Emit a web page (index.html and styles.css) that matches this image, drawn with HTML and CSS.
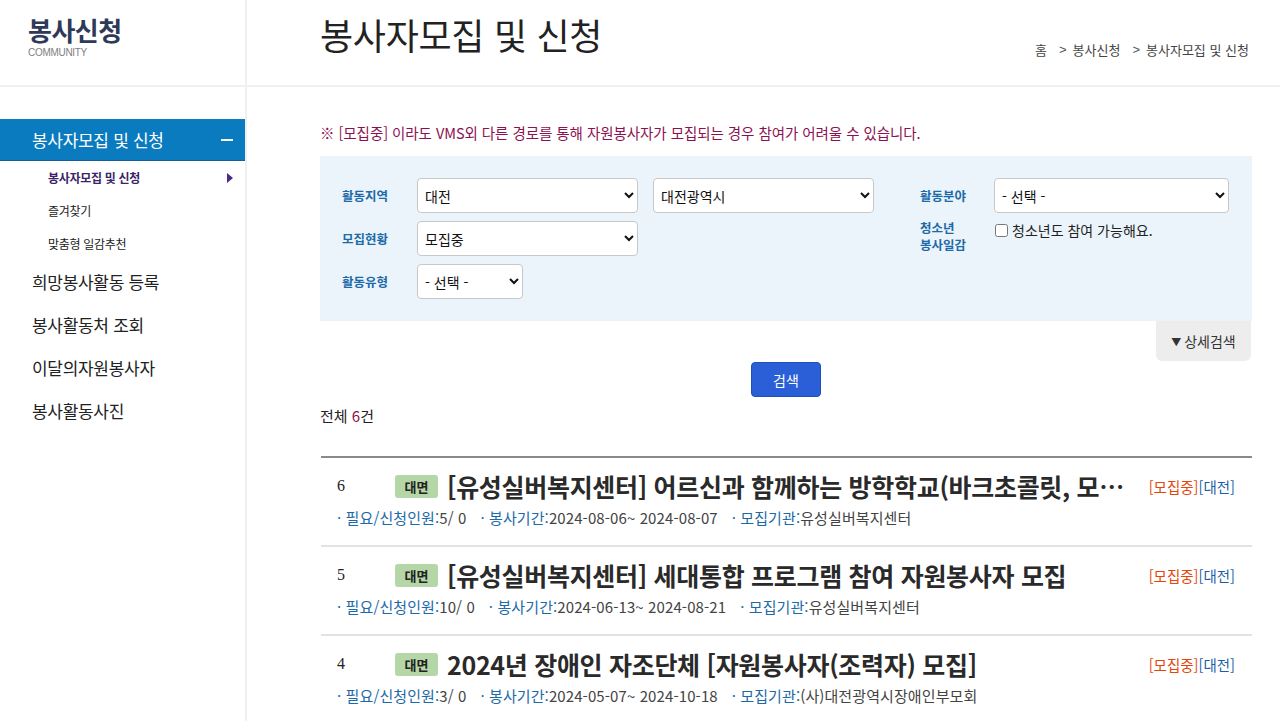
FILE: index.html
```html
<!DOCTYPE html>
<html lang="ko">
<head>
<meta charset="utf-8">
<title>봉사자모집 및 신청</title>
<link rel="stylesheet" href="styles.css">
</head>
<body>
<div class="page">
  <aside class="sidebar">
    <div class="side-head">
      <div class="logo">봉사신청</div>
      <div class="logo-sub">COMMUNITY</div>
    </div>
    <nav class="menu">
      <a class="menu-item active">봉사자모집 및 신청<span class="minus"></span></a>
      <ul class="submenu">
        <li class="sub-active">봉사자모집 및 신청<span class="tri"></span></li>
        <li>즐겨찾기</li>
        <li>맞춤형 일감추천</li>
      </ul>
      <a class="menu-item">희망봉사활동 등록</a>
      <a class="menu-item">봉사활동처 조회</a>
      <a class="menu-item">이달의자원봉사자</a>
      <a class="menu-item">봉사활동사진</a>
    </nav>
  </aside>
  <main class="main">
    <header class="main-head">
      <h1 class="title">봉사자모집 및 신청</h1>
      <div class="crumb"><span>홈</span><span class="sep">&gt;</span><span>봉사신청</span><span class="sep">&gt;</span><span>봉사자모집 및 신청</span></div>
    </header>
    <section class="content">
      <p class="notice">※ [모집중] 이라도 VMS외 다른 경로를 통해 자원봉사자가 모집되는 경우 참여가 어려울 수 있습니다.</p>
      <div class="filter">
        <div class="fcol left">
          <div class="frow">
            <label class="flabel">활동지역</label>
            <select class="sel w221"><option>대전</option></select>
            <select class="sel w221 ml15"><option>대전광역시</option></select>
          </div>
          <div class="frow">
            <label class="flabel">모집현황</label>
            <select class="sel w221"><option>모집중</option></select>
          </div>
          <div class="frow">
            <label class="flabel">활동유형</label>
            <select class="sel w106"><option>- 선택 -</option></select>
          </div>
        </div>
        <div class="fcol right">
          <div class="frow">
            <label class="flabel w74">활동분야</label>
            <select class="sel w235"><option>- 선택 -</option></select>
          </div>
          <div class="frow top">
            <label class="flabel w74 two">청소년<br>봉사일감</label>
            <label class="check"><input type="checkbox">청소년도 참여 가능해요.</label>
          </div>
        </div>
      </div>
      <div class="tab-row"><span class="detail-tab"><span class="dtri">▼</span>상세검색</span></div>
      <div class="btn-row"><button class="search-btn">검색</button></div>
      <p class="total">전체 <em>6</em>건</p>
      <ul class="list">
        <li class="item">
          <div class="item-top">
            <span class="num">6</span>
            <span class="badge">대면</span>
            <span class="item-title">[유성실버복지센터] 어르신과 함께하는 방학학교(바크초콜릿, 모루인형 만들기 등) 보조 봉사자 모집</span>
            <span class="status"><span class="st-on">[모집중]</span><span class="st-area">[대전]</span></span>
          </div>
          <div class="meta">
            <span class="m"><b>· 필요/신청인원:</b>5/ 0</span>
            <span class="m"><b>· 봉사기간:</b>2024-08-06~ 2024-08-07</span>
            <span class="m"><b>· 모집기관:</b>유성실버복지센터</span>
          </div>
        </li>
        <li class="item">
          <div class="item-top">
            <span class="num">5</span>
            <span class="badge">대면</span>
            <span class="item-title">[유성실버복지센터] 세대통합 프로그램 참여 자원봉사자 모집</span>
            <span class="status"><span class="st-on">[모집중]</span><span class="st-area">[대전]</span></span>
          </div>
          <div class="meta">
            <span class="m"><b>· 필요/신청인원:</b>10/ 0</span>
            <span class="m"><b>· 봉사기간:</b>2024-06-13~ 2024-08-21</span>
            <span class="m"><b>· 모집기관:</b>유성실버복지센터</span>
          </div>
        </li>
        <li class="item">
          <div class="item-top">
            <span class="num">4</span>
            <span class="badge">대면</span>
            <span class="item-title">2024년 장애인 자조단체 [자원봉사자(조력자) 모집]</span>
            <span class="status"><span class="st-on">[모집중]</span><span class="st-area">[대전]</span></span>
          </div>
          <div class="meta">
            <span class="m"><b>· 필요/신청인원:</b>3/ 0</span>
            <span class="m"><b>· 봉사기간:</b>2024-05-07~ 2024-10-18</span>
            <span class="m"><b>· 모집기관:</b>(사)대전광역시장애인부모회</span>
          </div>
        </li>
      </ul>
    </section>
  </main>
</div>
</body>
</html>
```

FILE: styles.css
```css
* { box-sizing: border-box; }
html, body { margin: 0; padding: 0; }
body {
  font-family: "Noto Sans CJK KR", "Noto Sans", sans-serif;
  color: #333;
  background: #fff;
  overflow: hidden;
}
.page {
  display: flex;
  min-height: 721px;
}
.sidebar {
  width: 247px;
  flex-shrink: 0;
  border-right: 2px solid #f0f0f0;
}
.side-head {
  height: 87px;
  border-bottom: 2px solid #f0f0f0;
  padding: 14px 0 0 28px;
}
.logo {
  font-size: 26px;
  font-weight: 700;
  color: #2e3a58;
  line-height: 32px;
  letter-spacing: -0.5px;
}
.logo-sub {
  font-size: 10px;
  color: #808080;
  line-height: 12px;
  margin-top: 1px;
  font-family: "Liberation Sans", sans-serif;
  letter-spacing: -0.3px;
}
.menu { padding-top: 32px; display: flex; flex-direction: column; }
.menu-item {
  display: flex;
  align-items: center;
  height: 43px;
  padding-left: 32px;
  font-size: 17px;
  color: #222;
  letter-spacing: -0.3px;
}
.menu-item.active {
  background: #0b7bbf;
  color: #fff;
  height: 42px;
  justify-content: space-between;
  padding-right: 12px;
  border-bottom: 1px solid #1a5f91;
}
.minus {
  width: 12px;
  height: 2px;
  background: #fff;
}
.submenu {
  list-style: none;
  margin: 0;
  padding: 0 0 0 0;
}
.submenu li {
  height: 33px;
  display: flex;
  align-items: center;
  padding-left: 48px;
  padding-right: 12px;
  font-size: 12px;
  color: #222;
  letter-spacing: -0.3px;
}
.submenu li.sub-active {
  color: #3b2468;
  font-weight: 700;
  justify-content: space-between;
}
.tri {
  width: 0; height: 0;
  border-left: 6px solid #4b2a83;
  border-top: 5px solid transparent;
  border-bottom: 5px solid transparent;
}
.main { flex: 1; min-width: 0; }
.main-head {
  height: 87px;
  border-bottom: 2px solid #f0f0f0;
  display: flex;
  justify-content: space-between;
  align-items: flex-start;
  padding: 0 31px 0 73px;
}
.title {
  margin: 10px 0 0 0;
  font-size: 36px;
  font-weight: 400;
  color: #222;
  line-height: 48px;
  letter-spacing: -0.3px;
}
.crumb {
  margin-top: 40px;
  font-size: 13px;
  color: #444;
  display: flex;
  gap: 6px;
  line-height: 20px;
}
.crumb .sep { margin-left: 6px; color: #555; font-family: "Liberation Sans", sans-serif; }
.content {
  padding: 0 28px 0 73px;
}
.notice {
  margin: 35px 0 0 0;
  font-size: 14.5px;
  color: #8c1150;
  line-height: 22px;
  letter-spacing: -0.05px;
}
.filter {
  margin-top: 12px;
  background: #ebf4fb;
  padding: 22px 23px 22px 22px;
  display: flex;
  justify-content: space-between;
}
.fcol { display: flex; flex-direction: column; gap: 8px; }
.frow { display: flex; align-items: center; height: 35px; }
.frow.top { align-items: flex-start; height: auto; padding-top: 0; }
.flabel {
  width: 75px;
  font-size: 12.5px;
  font-weight: 700;
  color: #1c6aa8;
  flex-shrink: 0;
}
.flabel.w74 { width: 74px; }
.flabel.two { line-height: 17px; margin-top: -2px; }
.sel {
  height: 35px;
  border: 1px solid #c8c8c8;
  border-radius: 4px;
  background: #fff;
  font-family: "Noto Sans CJK KR", sans-serif;
  font-size: 14px;
  color: #111;
  padding: 0 3px;
}
.w221 { width: 221px; }
.w106 { width: 106px; }
.w235 { width: 235px; }
.ml15 { margin-left: 15px; }
.check {
  display: flex;
  align-items: center;
  font-size: 14px;
  color: #222;
  margin-top: 0;
  line-height: 18px;
}
.check input { margin: 0 4px 0 1px; width: 13px; height: 13px; }
.tab-row { display: flex; justify-content: flex-end; }
.detail-tab {
  width: 95px;
  height: 40px;
  margin-right: 1px;
  background: #ededed;
  border-radius: 0 0 6px 6px;
  display: flex;
  align-items: center;
  justify-content: center;
  font-size: 14px;
  color: #333;
}
.dtri { font-size: 10px; margin-right: 3px; }
.btn-row { display: flex; justify-content: center; margin-top: 1px; }
.search-btn {
  width: 70px;
  height: 35px;
  background: #2a5fd7;
  border: 1px solid #1f4fb8;
  border-radius: 4px;
  color: #fff;
  font-family: "Noto Sans CJK KR", sans-serif;
  font-size: 14px;
  padding: 0;
}
.total {
  margin: 8px 0 0 0;
  font-size: 15px;
  color: #222;
  line-height: 22px;
}
.total em { font-style: normal; color: #8c1150; }
.list {
  list-style: none;
  margin: 29px 0 0 1px;
  padding: 0;
  border-top: 2px solid #8a8a8a;
}
.item {
  height: 89px;
  border-bottom: 2px solid #e2e2e2;
  padding: 13px 17px 0 16px;
}
.item-top {
  display: flex;
  align-items: center;
  height: 30px;
}
.num {
  width: 58px;
  flex-shrink: 0;
  font-family: "Liberation Serif", serif;
  font-size: 16px;
  color: #222;
}
.badge {
  flex-shrink: 0;
  width: 43px;
  height: 23px;
  background: #b5d6a6;
  border-radius: 3px;
  font-size: 13px;
  font-weight: 700;
  color: #222;
  display: flex;
  align-items: center;
  justify-content: center;
  margin-right: 9px;
}
.item-title {
  flex: 1;
  min-width: 0;
  white-space: nowrap;
  overflow: hidden;
  text-overflow: ellipsis;
  font-size: 25px;
  font-weight: 600;
  color: #2a2a2a;
  letter-spacing: -0.3px;
  padding-right: 20px;
}
.status {
  flex-shrink: 0;
  font-size: 14.5px;
  white-space: nowrap;
}
.st-on { color: #e4470c; }
.st-area { color: #1a5fa6; }
.meta {
  margin-top: 7px;
  display: flex;
  gap: 14px;
  font-size: 15px;
  color: #444;
  line-height: 20px;
  letter-spacing: 0.1px;
}
.meta b { font-weight: 400; color: #1c6aa8; }
```
